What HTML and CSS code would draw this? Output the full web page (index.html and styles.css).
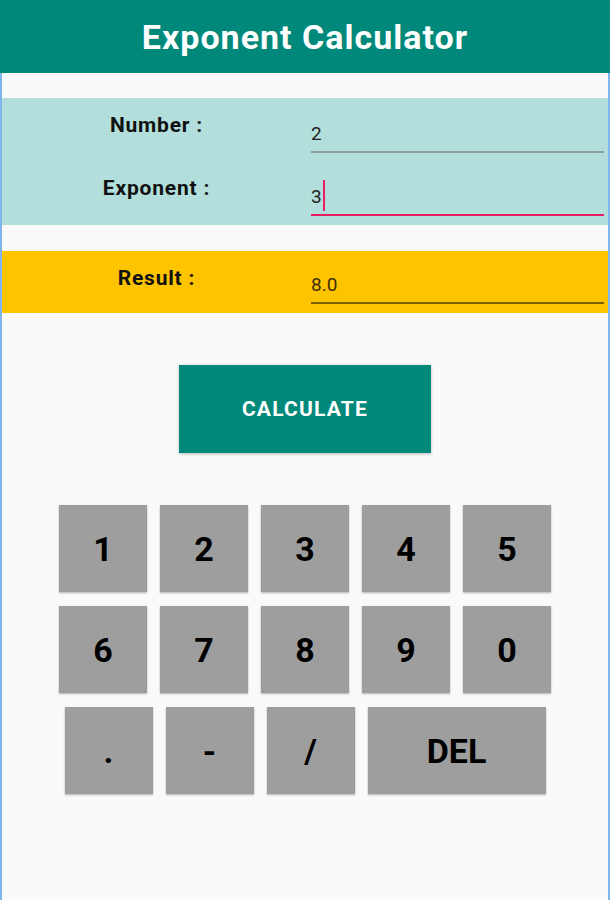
FILE: index.html
```html
<!DOCTYPE html>
<html lang="en">
<head>
  <meta charset="UTF-8">
  <meta name="viewport" content="width=device-width, initial-scale=1.0">
  <title>Exponent Calculator</title>
  <link rel="stylesheet" href="styles.css">
</head>
<body>
  <header class="app-bar">
    <h1>Exponent Calculator</h1>
  </header>

  <main class="content">
    <div class="inputs-panel">
      <div class="field-row">
        <span class="field-label">Number :</span>
        <div class="field">2</div>
      </div>
      <div class="field-row">
        <span class="field-label">Exponent :</span>
        <div class="field focused"><span class="caret-text">3</span></div>
      </div>
    </div>

    <div class="result-panel">
      <div class="field-row">
        <span class="field-label">Result :</span>
        <div class="field result">8.0</div>
      </div>
    </div>

    <div class="calc-section">
      <button class="calc-button">CALCULATE</button>
    </div>

    <div class="keypad">
      <div class="key-row five">
        <button class="key">1</button>
        <button class="key">2</button>
        <button class="key">3</button>
        <button class="key">4</button>
        <button class="key">5</button>
      </div>
      <div class="key-row five">
        <button class="key">6</button>
        <button class="key">7</button>
        <button class="key">8</button>
        <button class="key">9</button>
        <button class="key">0</button>
      </div>
      <div class="key-row last">
        <button class="key">.</button>
        <button class="key">-</button>
        <button class="key">/</button>
        <button class="key">DEL</button>
      </div>
    </div>
  </main>
</body>
</html>
```

FILE: styles.css
```css
body {
  font-family: Roboto, "Noto Sans", "Liberation Sans", sans-serif;
  margin: 0;
  padding: 0;
  color: #111;
  background-color: #fafafa;
}

.app-bar {
  height: 73px;
  background: #00897b;
  display: flex;
  align-items: center;
  justify-content: center;
}

.app-bar h1 {
  margin: 0;
  color: #fff;
  font-size: 34px;
  font-weight: 700;
  letter-spacing: 1px;
}

.content {
  min-height: calc(100vh - 73px);
  box-sizing: border-box;
  border-left: 2px solid #7fb6ee;
  border-right: 2px solid #7fb6ee;
  padding-top: 25px;
}

.inputs-panel {
  background: #b2dfdb;
  height: 127px;
}

.result-panel {
  margin-top: 26px;
  background: #ffc400;
  height: 62px;
}

.field-row {
  display: grid;
  grid-template-columns: 309px 1fr;
  height: 63px;
}

.field-label {
  text-align: center;
  font-size: 21px;
  font-weight: 700;
  line-height: 24px;
  margin-top: 15px;
  letter-spacing: 0.8px;
}

.field {
  margin-top: 24px;
  margin-right: 4px;
  height: 24px;
  line-height: 24px;
  font-size: 19px;
  padding-bottom: 5px;
  border-bottom: 2px solid #8c9e9c;
  color: #222;
}

.field.focused {
  border-bottom-color: #e91e63;
}

.field.result {
  margin-top: 22px;
  border-bottom-color: #7d6000;
  color: #3b2f00;
}

.caret-text {
  position: relative;
}

.caret-text::after {
  content: "";
  position: absolute;
  right: -3px;
  top: -5px;
  width: 2px;
  height: 31px;
  background: #e91e63;
}

.calc-section {
  display: flex;
  justify-content: center;
  margin-top: 52px;
}

.calc-button {
  width: 252px;
  height: 88px;
  background: #00897b;
  color: #fff;
  border: none;
  font-family: inherit;
  font-size: 21px;
  font-weight: 700;
  letter-spacing: 1.2px;
  box-shadow: 0 1px 3px rgba(0, 0, 0, 0.25);
  cursor: pointer;
}

.keypad {
  margin-top: 52px;
  display: flex;
  flex-direction: column;
  align-items: center;
  gap: 14px;
}

.key-row {
  display: grid;
  gap: 13px;
}

.key-row.five {
  grid-template-columns: repeat(5, 88px);
}

.key-row.last {
  grid-template-columns: 88px 88px 88px 178px;
}

.key {
  height: 87px;
  background: #9e9e9e;
  border: none;
  color: #000;
  font-family: inherit;
  font-size: 34px;
  font-weight: 700;
  box-shadow: 0 1px 2px rgba(0, 0, 0, 0.3);
  cursor: pointer;
  padding: 0;
}
```
